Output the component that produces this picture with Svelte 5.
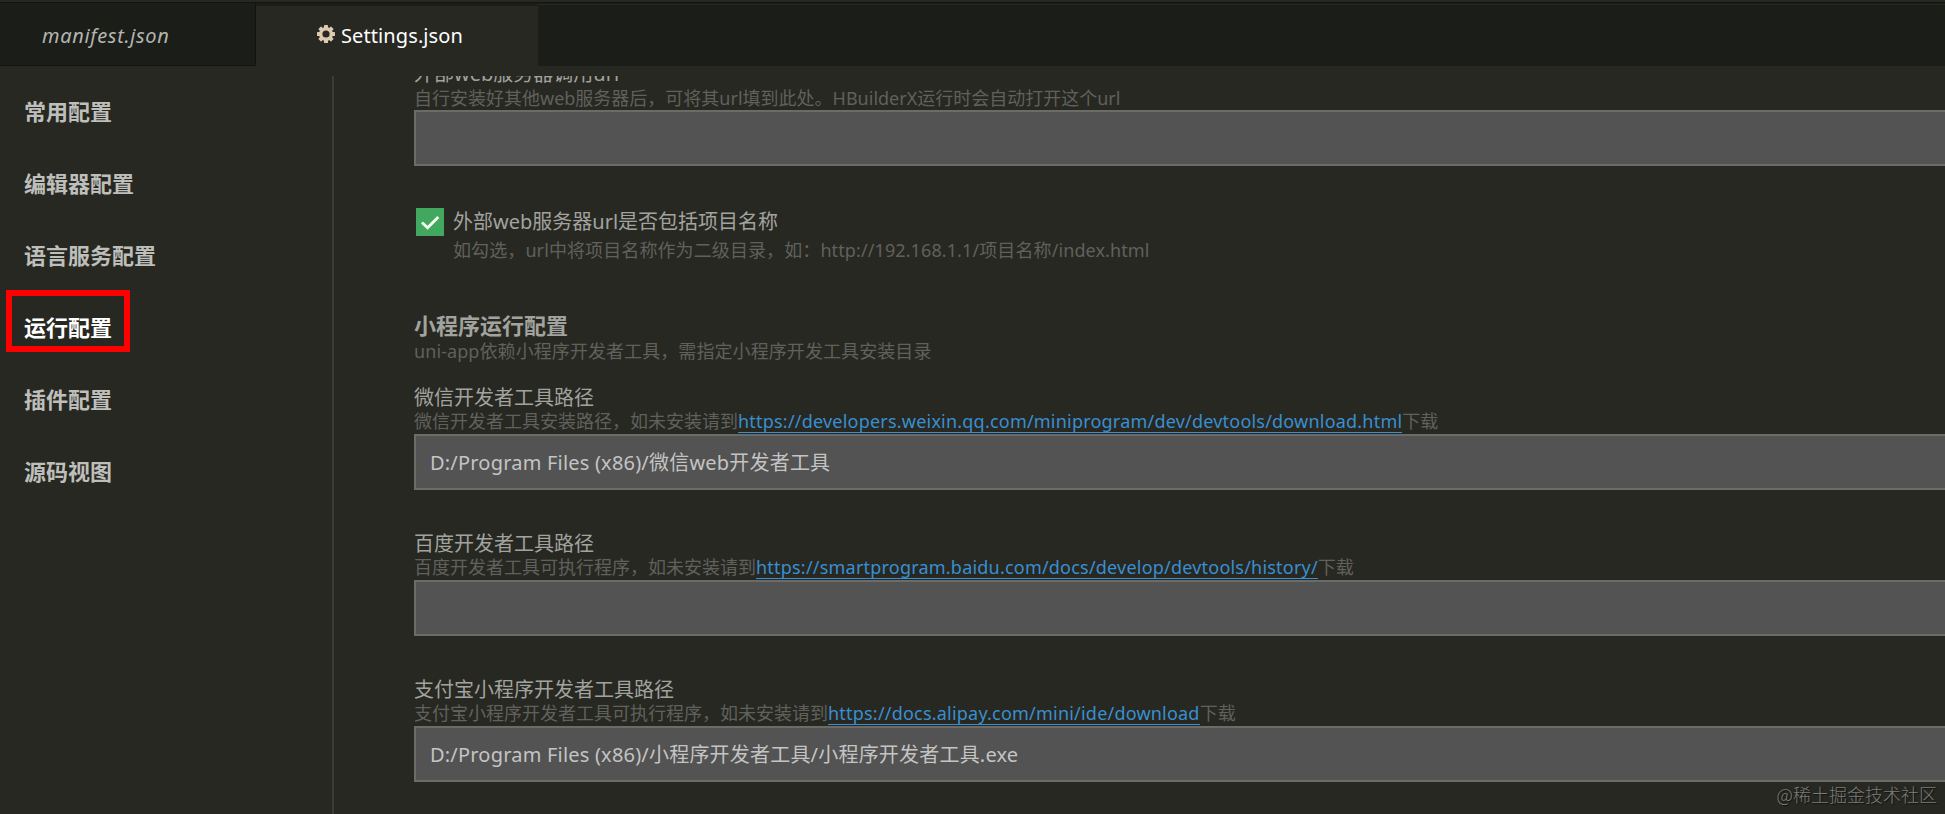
<script lang="ts">
	type Tool = {
		label: string;
		hint: string;
		url: string;
		path: string;
	};

	const menu = ['常用配置', '编辑器配置', '语言服务配置', '运行配置', '插件配置', '源码视图'];
	let active = $state('运行配置');
	let includeName = $state(true);
	let serverUrl = $state('');

	let tools = $state<Tool[]>([
		{
			label: '微信开发者工具路径',
			hint: '微信开发者工具安装路径，如未安装请到',
			url: 'https://developers.weixin.qq.com/miniprogram/dev/devtools/download.html',
			path: 'D:/Program Files (x86)/微信web开发者工具'
		},
		{
			label: '百度开发者工具路径',
			hint: '百度开发者工具可执行程序，如未安装请到',
			url: 'https://smartprogram.baidu.com/docs/develop/devtools/history/',
			path: ''
		},
		{
			label: '支付宝小程序开发者工具路径',
			hint: '支付宝小程序开发者工具可执行程序，如未安装请到',
			url: 'https://docs.alipay.com/mini/ide/download',
			path: 'D:/Program Files (x86)/小程序开发者工具/小程序开发者工具.exe'
		}
	]);
</script>

<div class="window">
	<header class="tabs">
		<div class="tab preview">manifest.json</div>
		<div class="tab current">
			<svg class="gear" viewBox="0 0 18 18">
				<g fill="#dcc9b0">
					{#each [0, 45, 90, 135] as angle}
						<rect x="7" y="0" width="4" height="18" rx="0.6" transform="rotate({angle} 9 9)" />
					{/each}
					<circle cx="9" cy="9" r="7" />
				</g>
				<circle cx="9" cy="9" r="3.6" fill="#272822" />
			</svg>
			<span>Settings.json</span>
		</div>
		<div class="rest"></div>
	</header>

	<div class="body">
		<nav>
			{#each menu as item}
				<button class:active={active === item} onclick={() => (active = item)}>{item}</button>
			{/each}
		</nav>

		<main>
			<section class="field first">
				<div class="label">外部web服务器调用url</div>
				<div class="hint">自行安装好其他web服务器后，可将其url填到此处。HBuilderX运行时会自动打开这个url</div>
				<input bind:value={serverUrl} />
			</section>

			<section class="check">
				<button class="box" aria-label="toggle" onclick={() => (includeName = !includeName)}>
					{#if includeName}
						<svg viewBox="0 0 28 28">
							<path d="M6 14.5l5.6 5.2L22.3 9" fill="none" stroke="#f4fff0" stroke-width="2.8" />
						</svg>
					{/if}
				</button>
				<div>
					<div class="label">外部web服务器url是否包括项目名称</div>
					<div class="hint">如勾选，url中将项目名称作为二级目录，如：http://192.168.1.1/项目名称/index.html</div>
				</div>
			</section>

			<section class="heading">
				<h2>小程序运行配置</h2>
				<div class="hint">uni-app依赖小程序开发者工具，需指定小程序开发工具安装目录</div>
			</section>

			{#each tools as tool}
				<section class="field">
					<div class="label">{tool.label}</div>
					<div class="hint">{tool.hint}<a href={tool.url}>{tool.url}</a>下载</div>
					<input bind:value={tool.path} />
				</section>
			{/each}
		</main>
	</div>

	<div class="watermark">@稀土掘金技术社区</div>
</div>

<style>
	:global(body) {
		margin: 0;
		background: #272822;
	}

	.window {
		position: relative;
		display: flex;
		flex-direction: column;
		height: 814px;
		overflow: hidden;
		background: #272822;
		font-family: 'Noto Sans', 'Noto Sans CJK SC', sans-serif;
	}

	.tabs {
		display: flex;
		height: 64px;
		flex: none;
		border-top: 2px solid #272822;
		background: #1b1d19;
		box-shadow: inset 0 1px #131411;
	}

	.tab {
		display: flex;
		align-items: center;
		box-sizing: border-box;
		font-size: 20px;
	}

	.preview {
		width: 256px;
		padding: 4px 0 0 42px;
		border-right: 1px solid #131411;
		border-bottom: 1px solid #131411;
		color: #b4b5b0;
		font-style: italic;
		letter-spacing: 0.65px;
	}

	.current {
		width: 282px;
		margin-top: 4px;
		padding: 0 0 2px 61px;
		gap: 6px;
		background: #272822;
		color: #fff;
		letter-spacing: 0.1px;
	}

	.gear {
		width: 18px;
		height: 18px;
		margin-top: -3px;
	}

	.rest {
		flex: 1;
		margin-top: 2px;
		border-top: 1px solid #272822;
	}

	.body {
		display: flex;
		flex: 1;
		min-height: 0;
		padding-top: 10px;
	}

	nav {
		display: flex;
		flex-direction: column;
		width: 332px;
		flex: none;
		border-right: 2px solid #3b3c37;
	}

	nav button {
		position: relative;
		height: 72px;
		padding: 0 0 4px 24px;
		border: none;
		background: none;
		color: #bebfbb;
		font: bold 22px/32px 'Noto Sans CJK SC', sans-serif;
		text-align: left;
	}

	nav button.active {
		color: #fff;
	}

	/* red marker around the selected entry */
	nav button.active::before {
		content: '';
		position: absolute;
		top: -2px;
		left: 6px;
		box-sizing: border-box;
		width: 124px;
		height: 62px;
		border: 6px solid #fe0000;
	}

	main {
		flex: 1;
		min-width: 0;
		padding-left: 80px;
		overflow: hidden;
	}

	.label {
		height: 24px;
		color: #a2a39f;
		font-size: 20px;
		line-height: 24px;
		white-space: nowrap;
	}

	.hint {
		height: 24px;
		color: #60615c;
		font-size: 18px;
		line-height: 23px;
		white-space: nowrap;
	}

	.field {
		margin-bottom: 42px;
	}

	/* scrolled partly under the tab bar */
	.first {
		margin-top: -14px;
	}

	.first .hint {
		line-height: 25px;
	}

	input {
		display: block;
		box-sizing: border-box;
		width: 1600px;
		height: 56px;
		padding: 0 14px 2px;
		border: 2px solid #6b6b67;
		background: #535353;
		color: #c4c4c4;
		font: inherit;
		font-size: 20px;
		letter-spacing: 0.2px;
		outline: none;
	}

	a {
		color: #3a8fd0;
		letter-spacing: 0.21px;
		text-decoration: none;
		box-shadow: inset 0 -1px #3a8fd0;
	}

	.check {
		display: flex;
		gap: 9px;
		padding-left: 2px;
	}

	.check .label {
		margin: 2px 0 4px;
	}

	.check .hint {
		line-height: 25px;
		letter-spacing: 0.1px;
	}

	.box {
		width: 28px;
		height: 28px;
		padding: 0;
		border: none;
		background: #42a85f;
	}

	.box svg {
		display: block;
	}

	.heading {
		margin: 50px 0 22px;
	}

	.heading .hint {
		letter-spacing: 0.08px;
	}

	h2 {
		height: 28px;
		margin: 0;
		color: #a2a39f;
		font-size: 22px;
		line-height: 26px;
	}

	.watermark {
		position: absolute;
		right: 8px;
		bottom: 7px;
		color: #7c7d78;
		font: 300 18px/26px 'Noto Sans CJK SC', sans-serif;
		text-shadow: 1px 1px 1px #111;
	}
</style>
